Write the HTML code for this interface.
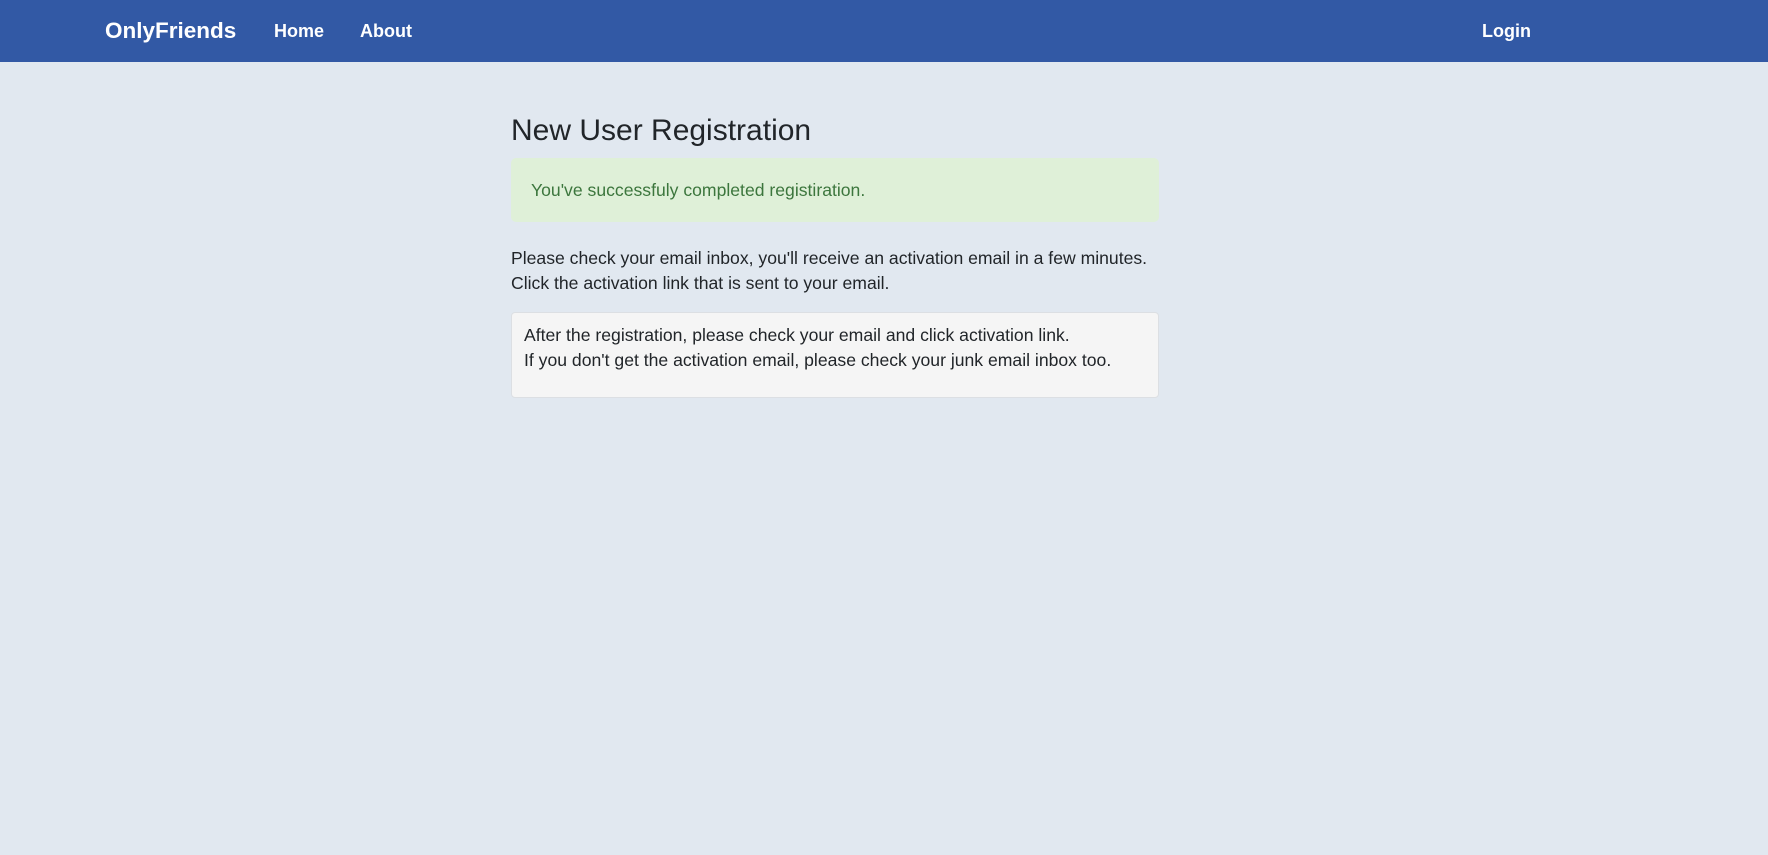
<!DOCTYPE html>
<html><head><style>
*{box-sizing:border-box;margin:0;padding:0}
body{width:1768px;height:855px;background:#e1e8f0;font-family:"Liberation Sans",Arial,sans-serif;color:#212529;overflow:hidden;position:relative}
.nav{position:absolute;left:0;top:0;width:1768px;height:62px;background:#3259a5;color:#fff;font-weight:bold}
.nav span{position:absolute;top:0;line-height:62px}
.brand{left:105px;font-size:22.5px}
.l{font-size:18px}
h1{position:absolute;left:511px;top:111px;font-size:30px;font-weight:normal;line-height:40px}
.alert{position:absolute;left:511px;top:158px;width:648px;height:64px;background:#dff0d8;border-radius:5px;color:#3c763d;font-size:17.6px;line-height:64px;padding-left:20px}
p{position:absolute;left:511px;top:246px;font-size:17.6px;line-height:25px}
.well{position:absolute;left:511px;top:312px;width:648px;height:86px;background:#f5f5f5;border:1px solid #dcdfe3;border-radius:4px;padding:10px 12px;font-size:17.6px;line-height:25px}
</style></head><body>
<div class="nav"><span class="brand">OnlyFriends</span><span class="l" style="left:274px">Home</span><span class="l" style="left:360px">About</span><span class="l" style="left:1482px">Login</span></div>
<h1>New User Registration</h1>
<div class="alert">You've successfuly completed registiration.</div>
<p>Please check your email inbox, you'll receive an activation email in a few minutes.<br>Click the activation link that is sent to your email.</p>
<div class="well">After the registration, please check your email and click activation link.<br>If you don't get the activation email, please check your junk email inbox too.</div>
</body></html>
